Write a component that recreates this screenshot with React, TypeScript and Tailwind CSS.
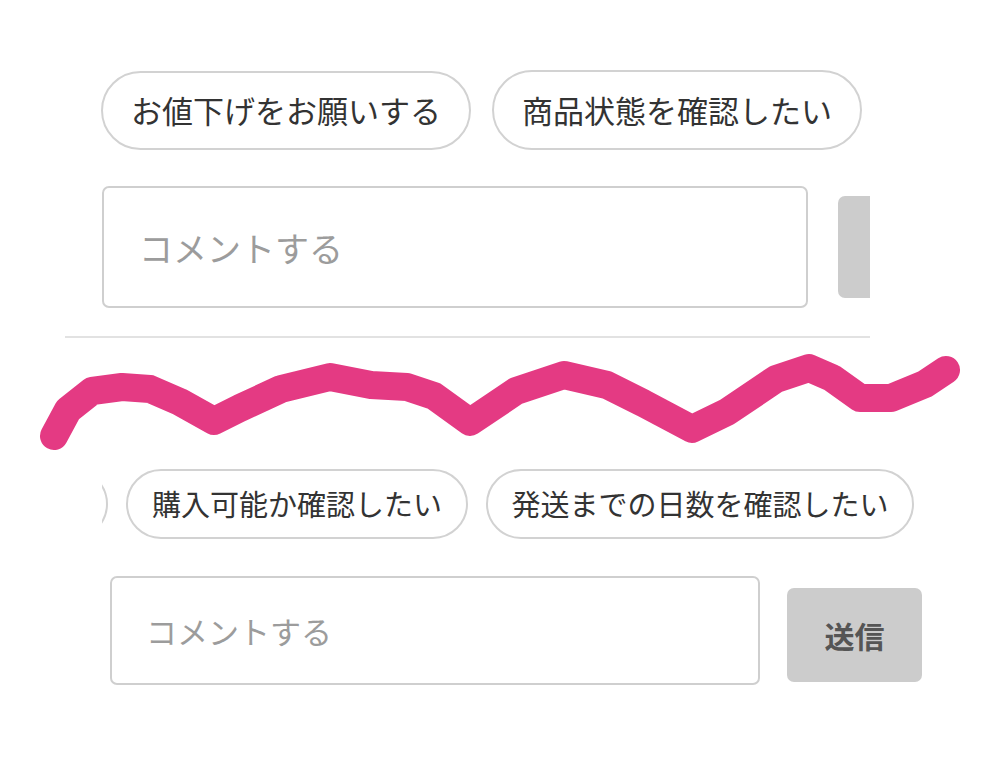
import React from 'react';

const font = { fontFamily: '"Noto Sans CJK JP", "Noto Sans", sans-serif' };

// hand-drawn pink scribble between the two screenshots
const wave = [
  [54, 438], [68, 412], [92, 393], [122, 389], [150, 391], [180, 404], [214, 423],
  [240, 410], [281, 391], [330, 379], [371, 387], [407, 389], [434, 398], [470, 424],
  [516, 393], [564, 377], [607, 387], [643, 405], [692, 431], [727, 414], [776, 381],
  [809, 370], [832, 380], [860, 400], [891, 400], [925, 386], [946, 372],
];

const Chip = ({ label, className }: { label?: string; className: string }) => (
  <div
    className={`shrink-0 rounded-full border-2 border-[#d2d2d2] bg-white text-[#333] whitespace-nowrap flex items-center justify-center ${className}`}
  >
    {label}
  </div>
);

export default function App() {
  return (
    <div className="w-[999px] h-[769px] bg-white overflow-hidden" style={font}>
      {/* before */}
      <div className="w-[870px] overflow-hidden">
        <div className="flex gap-[21px] pt-[71px] pl-[101px]">
          <Chip label="お値下げをお願いする" className="w-[370px] h-[79px] text-[31px]" />
          <Chip label="商品状態を確認したい" className="w-[370px] h-[80px] text-[31px] -mt-[1px]" />
        </div>
        <div className="flex items-center mt-[36px] pl-[102px]">
          <input
            type="text"
            placeholder="コメントする"
            className="shrink-0 w-[706px] h-[122px] rounded-[7px] border-2 border-[#cfcfcf] pl-[35px] text-[34px] text-[#333] placeholder:text-[#9c9c9c] outline-none"
          />
          <div className="shrink-0 ml-[30px] w-[100px] h-[102px] rounded-[7px] bg-[#cccccc]" />
        </div>
        <div className="mt-[28px] ml-[65px] h-[2px] bg-[#e2e2e2]" />
      </div>

      <svg width="999" height="122" viewBox="0 340 999 122" className="block">
        <polyline
          points={wave.map((p) => p.join(',')).join(' ')}
          fill="none"
          stroke="#e43a83"
          strokeWidth="28"
          strokeLinecap="round"
          strokeLinejoin="round"
        />
      </svg>

      {/* after */}
      <div className="ml-[102px] overflow-hidden">
        <div className="flex gap-[18px] mt-[9px] -ml-[294px]">
          <Chip className="w-[300px] h-[70px]" />
          <Chip label="購入可能か確認したい" className="w-[342px] h-[70px] text-[29px]" />
          <Chip label="発送までの日数を確認したい" className="w-[428px] h-[70px] text-[29px]" />
        </div>
      </div>
      <div className="flex items-start mt-[37px] pl-[110px]">
        <input
          type="text"
          placeholder="コメントする"
          className="shrink-0 w-[650px] h-[109px] rounded-[7px] border-2 border-[#cfcfcf] pl-[34px] text-[31px] text-[#333] placeholder:text-[#9c9c9c] outline-none"
        />
        <button
          type="button"
          className="shrink-0 ml-[27px] mt-[12px] w-[135px] h-[94px] rounded-[7px] bg-[#cccccc] text-[#555] text-[30px] font-bold"
        >
          送信
        </button>
      </div>
    </div>
  );
}
